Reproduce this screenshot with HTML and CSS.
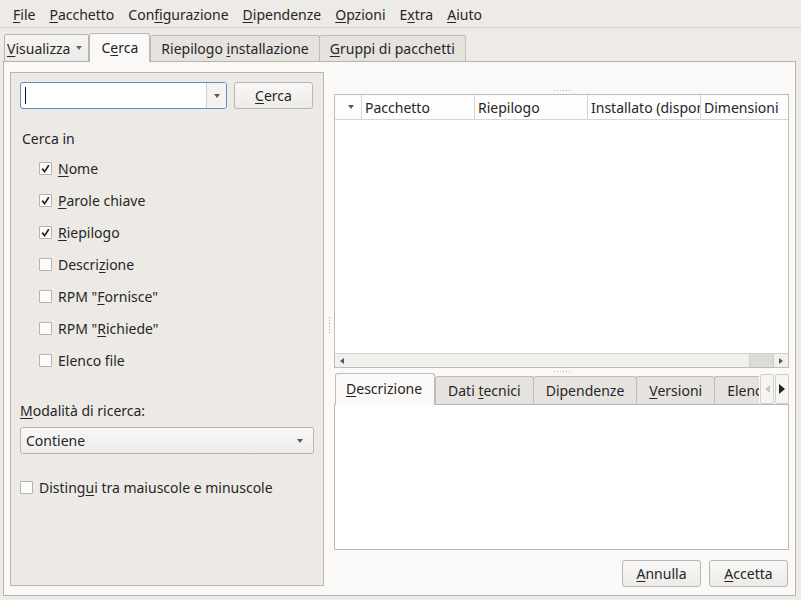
FILE: index.html
```html
<!DOCTYPE html>
<html>
<head>
<meta charset="utf-8">
<link rel="stylesheet" href="styles.css">
</head>
<body>
<div class="menubar">
  <span class="mi"><u>F</u>ile</span>
  <span class="mi"><u>P</u>acchetto</span>
  <span class="mi">Con<u>f</u>igurazione</span>
  <span class="mi"><u>D</u>ipendenze</span>
  <span class="mi"><u>O</u>pzioni</span>
  <span class="mi">E<u>x</u>tra</span>
  <span class="mi"><u>A</u>iuto</span>
</div>
<div class="main">
  <div class="tabrow">
    <div class="viewbtn"><span><u>V</u>isualizza</span><span class="caret"></span></div>
    <div class="tab sel"><span>C<u>e</u>rca</span></div>
    <div class="tab"><span>Riepilogo <u>i</u>nstallazione</span></div>
    <div class="tab"><span><u>G</u>ruppi di pacchetti</span></div>
  </div>
  <div class="page">
    <div class="left">
      <div class="searchrow">
        <div class="combo edit"><span class="cursor"></span><span class="combo-arrow sep"><span class="caret"></span></span></div>
        <div class="btn searchbtn"><span><u>C</u>erca</span></div>
      </div>
      <div class="label cercain">Cerca in</div>
      <div class="checks">
        <div class="chk"><span class="box on"><svg width="13" height="13" viewBox="0 0 13 13"><path d="M3.2 6.6 L5.6 9.6 L9.8 3.2" fill="none" stroke="#232323" stroke-width="1.7"/></svg></span><span><u>N</u>ome</span></div>
        <div class="chk"><span class="box on"><svg width="13" height="13" viewBox="0 0 13 13"><path d="M3.2 6.6 L5.6 9.6 L9.8 3.2" fill="none" stroke="#232323" stroke-width="1.7"/></svg></span><span><u>P</u>arole chiave</span></div>
        <div class="chk"><span class="box on"><svg width="13" height="13" viewBox="0 0 13 13"><path d="M3.2 6.6 L5.6 9.6 L9.8 3.2" fill="none" stroke="#232323" stroke-width="1.7"/></svg></span><span><u>R</u>iepilogo</span></div>
        <div class="chk"><span class="box"></span><span>Descri<u>z</u>ione</span></div>
        <div class="chk"><span class="box"></span><span>RPM "<u>F</u>ornisce"</span></div>
        <div class="chk"><span class="box"></span><span>RPM "<u>R</u>ichiede"</span></div>
        <div class="chk"><span class="box"></span><span>Elenco file</span></div>
      </div>
      <div class="label modlabel"><u>M</u>odalità di ricerca:</div>
      <div class="combo select"><span>Contiene</span><span class="combo-arrow"><span class="caret"></span></span></div>
      <div class="chk case"><span class="box"></span><span>Disting<u>u</u>i tra maiuscole e minuscole</span></div>
    </div>
    <div class="vsplit"><span class="vdots"></span></div>
    <div class="right">
      <div class="topsplit"><span class="hdots"></span></div>
      <div class="table">
        <div class="thead">
          <div class="th sortcol"><span class="caret"></span></div>
          <div class="th c1"><span>Pacchetto</span></div>
          <div class="th c1"><span>Riepilogo</span></div>
          <div class="th c1"><span>Installato (disponibile)</span></div>
          <div class="th last"><span>Dimensioni</span></div>
        </div>
        <div class="tbody"></div>
        <div class="hscroll">
          <span class="sarrow"><span class="tri-l"></span></span>
          <span class="trough"><span class="slider"></span></span>
          <span class="sarrow"><span class="tri-r"></span></span>
        </div>
      </div>
      <div class="midsplit"><span class="hdots"></span></div>
      <div class="notebook">
        <div class="ntabs">
          <div class="ntab sel"><span><u>D</u>escrizione</span></div>
          <div class="ntab"><span>Dati <u>t</u>ecnici</span></div>
          <div class="ntab"><span>Dipendenze</span></div>
          <div class="ntab"><span><u>V</u>ersioni</span></div>
          <div class="ntab clip"><span>Elenco file</span></div>
          <div class="nscroll"><span class="tri-l dis"></span></div>
          <div class="nscroll"><span class="tri-r big"></span></div>
        </div>
        <div class="ncontent"></div>
      </div>
      <div class="buttons">
        <div class="btn"><span><u>A</u>nnulla</span></div>
        <div class="btn"><span><u>A</u>ccetta</span></div>
      </div>
    </div>
  </div>
</div>
</body>
</html>
```

FILE: styles.css
```css
* { box-sizing: border-box; }
html, body { margin: 0; }
body {
  width: 801px;
  height: 600px;
  overflow: hidden;
  background: #eeebe7;
  font-family: "Noto Sans", sans-serif;
  font-size: 14px;
  color: #262626;
}
u {
  text-decoration: underline;
  text-decoration-thickness: 1px;
  text-underline-offset: 2px;
}
.caret {
  display: inline-block;
  width: 0;
  height: 0;
  border-left: 3.5px solid transparent;
  border-right: 3.5px solid transparent;
  border-top: 4px solid #5a5a5a;
  vertical-align: middle;
}

/* menu */
.menubar {
  height: 28px;
  display: flex;
  align-items: center;
  padding: 2px 0 0 6px;
  border-bottom: 1px solid #d9d5d0;
  white-space: nowrap;
}
.mi { padding: 0 7px; }

/* top tabs */
.main { padding: 0 5px 0 3px; }
.tabrow {
  display: flex;
  align-items: flex-end;
  height: 33px;
  padding-left: 1px;
  white-space: nowrap;
}
.viewbtn {
  height: 28px;
  margin-bottom: -1px;
  border: 1px solid #b7b3ae;
  border-radius: 2px;
  background: linear-gradient(#f7f6f4, #eceae7);
  display: flex;
  align-items: center;
  padding: 0 6px 0 2px;
  gap: 6px;
  position: relative;
  z-index: 2;
}
.viewbtn .caret { border-top-color: #666; }
.tab {
  height: 26px;
  padding: 0 10px;
  border: 1px solid #c0bcb7;
  border-bottom: none;
  border-radius: 3px 3px 0 0;
  background: #e6e3df;
  display: flex;
  align-items: center;
  margin-left: -1px;
}
.tab.sel {
  height: 29px;
  margin-bottom: -1px;
  background: #fbf9f7;
  margin-left: 0;
  padding: 0 11px 2px;
  border-color: #bcb8b3;
  position: relative;
  z-index: 3;
}
.tab.sel + .tab { margin-left: 0; }

/* page */
.page {
  height: 535px;
  border: 1px solid #b7b3ae;
  background: #fbf9f7;
  display: flex;
  padding: 10px 6px 8px 6px;
}

/* left frame */
.left {
  width: 314px;
  margin-bottom: 1px;
  border: 1px solid #b9b5b0;
  background: #edeae6;
  padding: 9px 10px 0 9px;
  display: flex;
  flex-direction: column;
  white-space: nowrap;
}
.searchrow { display: flex; gap: 7px; }
.combo {
  height: 27px;
  border: 1px solid #b9b5b0;
  border-radius: 3px;
  display: flex;
  align-items: center;
  flex-shrink: 0;
}
.combo.edit {
  width: 207px;
  background: #fff;
  border-color: #5e8fc7;
  padding-left: 4px;
}
.cursor { width: 1px; height: 17px; background: #111; }
.combo-arrow {
  margin-left: auto;
  width: 20px;
  height: 100%;
  display: flex;
  align-items: center;
  justify-content: center;
}
.combo-arrow.sep {
  border-left: 1px solid #d3d0cc;
  background: #f4f3f2;
  border-radius: 0 2px 2px 0;
}
.btn {
  height: 27px;
  width: 79px;
  border: 1px solid #b9b5b0;
  border-radius: 3px;
  background: linear-gradient(#f8f7f6, #edebe8);
  display: flex;
  align-items: center;
  justify-content: center;
}
.label { line-height: 18px; }
.cercain { margin-top: 21px; padding-left: 2px; }
.checks { margin-top: 4px; padding-left: 19px; }
.chk {
  height: 32px;
  display: flex;
  align-items: center;
  gap: 6px;
}
.box {
  width: 13px;
  height: 13px;
  border: 1px solid #b5b1ac;
  background: #fcfcfc;
  border-radius: 1px;
  display: flex;
  flex-shrink: 0;
}
.box svg { margin: -1px; }
.modlabel { margin-top: 26px; }
.combo.select {
  margin-top: 7px;
  width: 294px;
  background: linear-gradient(#f9f8f7, #efedea);
  padding-left: 5px;
}
.combo.select .combo-arrow { width: 26px; }
.chk.case { margin-top: 17px; }

/* splitters */
.vsplit {
  width: 10px;
  display: flex;
  align-items: center;
  justify-content: center;
  padding-bottom: 8px;
}
.vdots {
  width: 1px;
  height: 17px;
  background: repeating-linear-gradient(180deg, #a8a4a0 0 1px, transparent 1px 3px);
}
.hdots {
  width: 16px;
  height: 1px;
  background: repeating-linear-gradient(90deg, #b3afaa 0 1px, transparent 1px 3px);
}

/* right column */
.right {
  flex: 1;
  min-width: 0;
  display: flex;
  flex-direction: column;
}
.topsplit {
  height: 22px;
  flex-shrink: 0;
  display: flex;
  align-items: flex-end;
  justify-content: center;
  padding-bottom: 3px;
}
.table {
  height: 274px;
  flex-shrink: 0;
  border: 1px solid #bfbbb6;
  background: #fff;
  display: flex;
  flex-direction: column;
}
.thead {
  height: 25px;
  flex-shrink: 0;
  display: flex;
  border-bottom: 1px solid #d9d6d2;
  background: #fdfdfd;
  overflow: hidden;
}
.th {
  height: 100%;
  display: flex;
  align-items: center;
  padding-left: 3px;
  white-space: nowrap;
  overflow: hidden;
  border-right: 1px solid #d9d6d2;
  flex-shrink: 0;
}
.sortcol { width: 27px; justify-content: center; padding-left: 6px; }
.c1 { width: 113px; }
.th.last { border-right: none; flex: 1; flex-shrink: 1; min-width: 0; }
.tbody { flex: 1; }
.hscroll {
  height: 14px;
  flex-shrink: 0;
  display: flex;
  border-top: 1px solid #d2cfcb;
  background: #f1f0ef;
}
.sarrow {
  width: 14px;
  display: flex;
  align-items: center;
  justify-content: center;
}
.trough { flex: 1; display: flex; justify-content: flex-end; }
.slider { width: 25px; background: #dddbd8; border-left: 1px solid #d0cdc9; border-right: 1px solid #d0cdc9; }
.tri-l, .tri-r {
  width: 0;
  height: 0;
  border-top: 3.5px solid transparent;
  border-bottom: 3.5px solid transparent;
}
.tri-l { border-right: 4px solid #555; }
.tri-r { border-left: 4px solid #555; }
.tri-l.dis { border-right-color: #c9c6c2; border-top-width: 4px; border-bottom-width: 4px; border-right-width: 5px; }
.tri-r.big { border-left-color: #222; border-top-width: 5px; border-bottom-width: 5px; border-left-width: 6px; }
.midsplit {
  height: 6px;
  flex-shrink: 0;
  display: flex;
  align-items: center;
  justify-content: center;
}

/* notebook */
.notebook { height: 176px; flex-shrink: 0; display: flex; flex-direction: column; }
.ntabs {
  height: 30px;
  flex-shrink: 0;
  display: flex;
  align-items: flex-end;
  padding-left: 1px;
}
.ntab {
  height: 28px;
  padding: 0 12px;
  border: 1px solid #c0bcb7;
  border-bottom: none;
  background: #e6e3df;
  display: flex;
  align-items: center;
  margin-left: -1px;
  border-radius: 3px 3px 0 0;
  white-space: nowrap;
  flex-shrink: 0;
}
.ntab.sel {
  height: 32px;
  margin-left: 0;
  margin-bottom: -1px;
  background: #fbf9f7;
  padding: 0 12px 2px 10px;
  width: 100px;
  position: relative;
  z-index: 2;
}
.ntab.sel + .ntab { margin-left: 0; }
.ntab.clip { flex: 1; flex-shrink: 1; min-width: 0; overflow: hidden; padding-right: 0; border-right: none; border-radius: 3px 0 0 0; }
.nscroll {
  width: 14px;
  height: 30px;
  flex-shrink: 0;
  border: 1px solid #d3d0cc;
  border-radius: 2px;
  background: #f6f5f3;
  display: flex;
  align-items: center;
  justify-content: center;
  margin-left: 1px;
}
.ncontent {
  flex: 1;
  border: 1px solid #bcb8b3;
  background: #fff;
}
.buttons {
  margin-top: 10px;
  display: flex;
  justify-content: flex-end;
  gap: 8px;
  padding-right: 1px;
  flex-shrink: 0;
}
```
